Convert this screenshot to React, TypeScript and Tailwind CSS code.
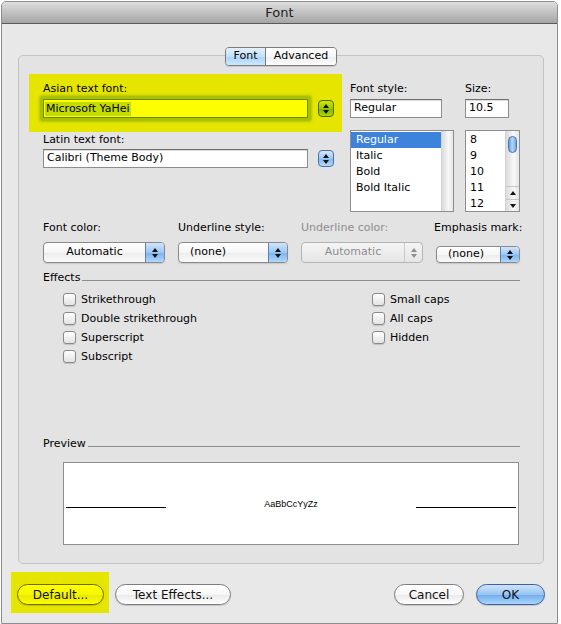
import React from 'react'

function UpDown({ color = '#111' }: { color?: string }) {
  return (
    <svg width="6" height="10" viewBox="0 0 6 10">
      <path d="M3 0L6 4H0Z M3 10L0 6H6Z" fill={color} />
    </svg>
  )
}

function Stepper({ green }: { green?: boolean }) {
  return (
    <div
      className={
        green
          ? 'ml-[10px] flex h-[17px] w-[16px] items-center justify-center rounded-[4px] border border-[#4a6b00] bg-[linear-gradient(to_bottom,#d2e600_0%,#a0c800_50%,#7eb400_51%,#b2d800_100%)]'
          : 'ml-[10px] flex h-[17px] w-[16px] items-center justify-center rounded-[4px] border border-[#4d70a8] bg-[linear-gradient(to_bottom,#d4e7fb_0%,#a0c9f3_50%,#7fb6ef_51%,#b4dafc_100%)]'
      }
    >
      <UpDown />
    </div>
  )
}

function Field({ w, children }: { w: string; children: React.ReactNode }) {
  return (
    <div
      className={`${w} flex h-[19px] items-center border border-[#8d8d8d] border-t-[#6e6e6e] bg-white px-[3px] shadow-[inset_0_1px_1px_rgba(0,0,0,0.15)]`}
    >
      {children}
    </div>
  )
}

function Popup({
  w,
  text,
  center,
  disabled,
  small,
}: {
  w: string
  text: string
  center?: boolean
  disabled?: boolean
  small?: boolean
}) {
  return (
    <div
      className={`${w} ${small ? 'h-[17px]' : 'h-[21px]'} flex overflow-hidden rounded-[4px] border ${
        disabled
          ? 'border-[#b4b4b4] bg-linear-to-b from-[#f4f4f4] to-[#e6e6e6] text-[#8d8d8d]'
          : 'border-[#8a8a8a] bg-[linear-gradient(to_bottom,#ffffff_0%,#f6f6f6_50%,#ececec_51%,#fbfbfb_100%)] shadow-[0_1px_1px_rgba(0,0,0,0.12)]'
      }`}
    >
      <div className={`flex flex-1 items-center ${center ? 'justify-center' : 'pl-[11px]'}`}>{text}</div>
      {disabled ? (
        <div className="flex w-[18px] items-center justify-center border-l border-[#c9c9c9]">
          <UpDown color="#8f8f8f" />
        </div>
      ) : (
        <div className="flex w-[19px] items-center justify-center border-l border-[#5b7fb8] bg-[linear-gradient(to_bottom,#d0e5fb_0%,#9dc7f3_50%,#79b2ef_51%,#afd8fc_100%)]">
          <UpDown />
        </div>
      )}
    </div>
  )
}

function Check({ label }: { label: string }) {
  return (
    <div className="flex h-[19px] items-center">
      <div className="h-[13px] w-[13px] rounded-[3px] border border-[#8a8a8a] bg-linear-to-b from-white to-[#e2e2e2] shadow-[0_1px_1px_rgba(0,0,0,0.15)]" />
      <span className="ml-[5px] leading-[13px]">{label}</span>
    </div>
  )
}

function PushButton({
  w,
  label,
  kind = 'plain',
}: {
  w: string
  label: string
  kind?: 'plain' | 'blue' | 'yellow'
}) {
  const look =
    kind === 'blue'
      ? 'border-[#3d5f9e] bg-[linear-gradient(to_bottom,#cde3f9_0%,#98c5f2_50%,#6fadee_51%,#a9d6fd_100%)]'
      : kind === 'yellow'
        ? 'border-[#6b6b00] bg-[linear-gradient(to_bottom,#ffff00_0%,#f6f600_50%,#e9e900_51%,#fbfb00_100%)]'
        : 'border-[#7c7c7c] bg-[linear-gradient(to_bottom,#ffffff_0%,#f7f7f7_50%,#e9e9e9_51%,#ffffff_100%)]'
  return (
    <div
      className={`${w} flex h-[21px] items-center justify-center rounded-full border text-[12px] text-[#111] shadow-[0_1px_1px_rgba(0,0,0,0.15)] ${look}`}
    >
      {label}
    </div>
  )
}

export default function App() {
  return (
    <div className="h-[624px] w-[561px] bg-white pl-px pt-px font-['DejaVu_Sans',sans-serif] text-[11px] text-black">
      <div className="flex h-[623px] w-[557px] flex-col overflow-hidden rounded-t-[5px] border border-[#8e8e8e] bg-[#e8e8e8]">
        {/* title bar */}
        <div className="flex h-[22px] items-center justify-center border-b border-[#5a5a5a] bg-linear-to-b from-[#dedede] to-[#a5a5a5] text-[13px] text-[#222]">
          Font
        </div>

        {/* tabs */}
        <div className="relative z-10 mt-[23px] flex justify-center pl-[3px]">
          <div className="flex h-[19px] overflow-hidden rounded-[4px] border border-[#7b7b7b] shadow-[0_1px_1px_rgba(0,0,0,0.12)]">
            <div className="flex w-[40px] items-center justify-center border-r border-[#7b7b7b] bg-[linear-gradient(to_bottom,#e3f1fc_0%,#c4e1f8_50%,#a9d3f6_51%,#cde8fd_100%)]">
              Font
            </div>
            <div className="flex w-[70px] items-center justify-center bg-[linear-gradient(to_bottom,#ffffff_0%,#f7f7f7_50%,#ececec_51%,#fdfdfd_100%)]">
              Advanced
            </div>
          </div>
        </div>

        {/* group box */}
        <div className="-mt-[11px] ml-[16px] h-[509px] w-[526px] rounded-[5px] border border-[#c3c3c3] bg-[#e3e3e3] pl-[10px]">
          <div className="flex">
            <div className="w-[313px]">
              <div className="mt-[18px] h-[58px] bg-[#e5e500] pl-[14px] pt-[8px]">
                <div className="leading-[13px]">Asian text font:</div>
                <div className="mt-[4px] flex items-center">
                  <div className="flex h-[19px] w-[265px] items-center border border-[#6b8800] bg-[#ffff00] px-[1px] shadow-[0_0_0_2px_#a6c200,0_0_3px_3px_#8aa800]">
                    <span className="bg-[#c4dc00] px-px leading-[14px]">Microsoft YaHei</span>
                  </div>
                  <Stepper green />
                </div>
              </div>
              <div className="pl-[14px]">
                <div className="mt-px leading-[13px]">Latin text font:</div>
                <div className="mt-[3px] flex items-center">
                  <Field w="w-[265px]">Calibri (Theme Body)</Field>
                  <Stepper />
                </div>
              </div>
            </div>

            <div className="ml-[8px] w-[104px] pt-[26px]">
              <div className="leading-[13px]">Font style:</div>
              <div className="mt-[4px]">
                <Field w="w-[92px]">Regular</Field>
              </div>
              <div className="mt-[12px] flex h-[82px] w-[104px] border border-[#8e8e8e] bg-white">
                <div className="flex-1 pt-px">
                  <div className="flex h-[16px] items-center bg-[#3d83dc] pl-[5px] text-white">Regular</div>
                  <div className="flex h-[16px] items-center pl-[5px]">Italic</div>
                  <div className="flex h-[16px] items-center pl-[5px]">Bold</div>
                  <div className="flex h-[16px] items-center pl-[5px]">Bold Italic</div>
                </div>
                <div className="w-[12px] border-l border-[#d4d4d4] bg-[linear-gradient(to_right,#dadada,#f8f8f8_60%,#e4e4e4)]" />
              </div>
            </div>

            <div className="ml-[11px] pt-[26px]">
              <div className="leading-[13px]">Size:</div>
              <div className="mt-[4px]">
                <Field w="w-[44px]">10.5</Field>
              </div>
              <div className="mt-[12px] flex h-[82px] w-[55px] border border-[#8e8e8e] bg-white">
                <div className="flex-1 pl-[4px] pt-px">
                  {['8', '9', '10', '11', '12'].map((s) => (
                    <div key={s} className="flex h-[16px] items-center">
                      {s}
                    </div>
                  ))}
                </div>
                <div className="flex w-[14px] flex-col border-l border-[#d4d4d4] bg-[linear-gradient(to_right,#dadada,#f8f8f8_60%,#e4e4e4)]">
                  <div className="flex-1 px-[2px] pt-[5px]">
                    <div className="h-[17px] w-[9px] rounded-full border border-[#4a73b0] bg-[linear-gradient(to_right,#5d9be6,#b7d8fb_45%,#6fa9ee)]" />
                  </div>
                  <div className="flex h-[13px] items-center justify-center border-t border-[#c6c6c6]">
                    <svg width="6" height="4" viewBox="0 0 6 4">
                      <path d="M3 0L6 4H0Z" fill="#111" />
                    </svg>
                  </div>
                  <div className="flex h-[12px] items-center justify-center border-t border-[#c6c6c6]">
                    <svg width="6" height="4" viewBox="0 0 6 4">
                      <path d="M3 4L0 0H6Z" fill="#111" />
                    </svg>
                  </div>
                </div>
              </div>
            </div>
          </div>

          {/* popups row */}
          <div className="ml-[14px] mt-[9px] flex">
            <div className="w-[135px]">
              <div className="leading-[13px]">Font color:</div>
              <div className="mt-[8px]">
                <Popup w="w-[122px]" text="Automatic" center />
              </div>
            </div>
            <div className="w-[123px]">
              <div className="leading-[13px]">Underline style:</div>
              <div className="mt-[8px]">
                <Popup w="w-[110px]" text="(none)" />
              </div>
            </div>
            <div className="w-[133px]">
              <div className="leading-[13px] text-[#8d8d8d]">Underline color:</div>
              <div className="mt-[8px]">
                <Popup w="w-[122px]" text="Automatic" center disabled />
              </div>
            </div>
            <div>
              <div className="leading-[13px]">Emphasis mark:</div>
              <div className="ml-[2px] mt-[12px]">
                <Popup w="w-[84px]" text="(none)" small />
              </div>
            </div>
          </div>

          {/* effects */}
          <div className="ml-[14px] mt-[8px] flex w-[477px] items-end">
            <span className="leading-[13px]">Effects</span>
            <div className="mb-[3px] ml-[2px] h-px flex-1 bg-[#8c8c8c]" />
          </div>
          <div className="ml-[34px] mt-[6px] flex">
            <div className="w-[309px]">
              <Check label="Strikethrough" />
              <Check label="Double strikethrough" />
              <Check label="Superscript" />
              <Check label="Subscript" />
            </div>
            <div>
              <Check label="Small caps" />
              <Check label="All caps" />
              <Check label="Hidden" />
            </div>
          </div>

          {/* preview */}
          <div className="ml-[14px] mt-[71px] flex w-[477px] items-end">
            <span className="leading-[13px]">Preview</span>
            <div className="mb-[3px] ml-[2px] h-px flex-1 bg-[#8c8c8c]" />
          </div>
          <div className="ml-[34px] mt-[12px] flex h-[83px] w-[456px] items-center justify-between border border-[#8e8e8e] bg-white px-[2px] pt-[8px]">
            <div className="h-px w-[100px] bg-black" />
            <span className="mb-[7px] font-['Liberation_Sans',sans-serif] text-[9px] leading-[10px]">AaBbCcYyZz</span>
            <div className="h-px w-[100px] bg-black" />
          </div>
        </div>

        {/* buttons */}
        <div className="mt-[8px] flex items-start">
          <div className="ml-[9px] h-[41px] w-[98px] bg-[#e5e500] pl-[6px] pt-[12px]">
            <PushButton w="w-[87px]" label="Default..." kind="yellow" />
          </div>
          <div className="ml-[6px] mt-[12px]">
            <PushButton w="w-[116px]" label="Text Effects..." />
          </div>
          <div className="ml-auto mr-[12px] mt-[12px] flex gap-[12px]">
            <PushButton w="w-[70px]" label="Cancel" />
            <PushButton w="w-[69px]" label="OK" kind="blue" />
          </div>
        </div>
      </div>
    </div>
  )
}
